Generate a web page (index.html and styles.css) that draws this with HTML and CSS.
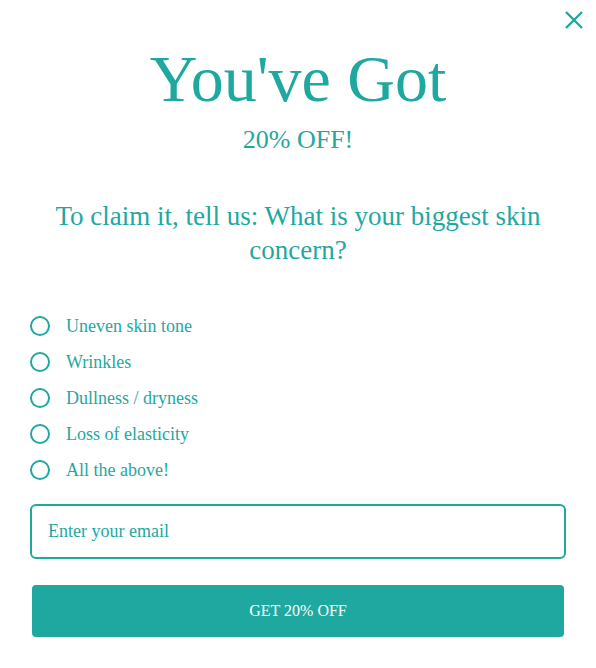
FILE: index.html
```html
<!DOCTYPE html>
<html lang="en">
<head>
    <meta charset="UTF-8">
    <meta name="viewport" content="width=device-width, initial-scale=1.0">
    <title>You've Got 20% OFF</title>
    <link rel="stylesheet" href="styles.css">
</head>
<body>
    <div id="popup">
        <button id="close-button" aria-label="Close">
            <svg width="18" height="18" viewBox="0 0 18 18">
                <path d="M1 1 L17 17 M17 1 L1 17" stroke="#1fa89f" stroke-width="2.4" fill="none"/>
            </svg>
        </button>
        <h1 class="title">You've Got</h1>
        <p class="subtitle">20% OFF!</p>
        <h2 class="question">To claim it, tell us: What is your biggest skin<br>concern?</h2>
        <form id="offer-form">
            <ul class="option-list">
                <li class="option-item"><span class="radio"></span>Uneven skin tone</li>
                <li class="option-item"><span class="radio"></span>Wrinkles</li>
                <li class="option-item"><span class="radio"></span>Dullness / dryness</li>
                <li class="option-item"><span class="radio"></span>Loss of elasticity</li>
                <li class="option-item"><span class="radio"></span>All the above!</li>
            </ul>
            <input type="text" id="email-input" placeholder="Enter your email" />
            <button type="button" id="submit-button">GET 20% OFF</button>
        </form>
    </div>
</body>
</html>
```

FILE: styles.css
```css
body {
    font-family: "Liberation Serif", "DejaVu Serif", serif;
    background: #ffffff;
    color: #1fa89f;
    margin: 0;
}
#popup {
    position: relative;
    padding: 39px 30px 0 30px;
}
#close-button {
    position: absolute;
    top: 11px;
    right: 13px;
    background: none;
    border: none;
    padding: 0;
    cursor: pointer;
}
.title {
    font-weight: normal;
    font-size: 66px;
    line-height: 80px;
    margin: 0;
    text-align: center;
}
.subtitle {
    font-size: 26px;
    line-height: 30px;
    margin: 6px 0 0 0;
    text-align: center;
}
.question {
    font-weight: normal;
    font-size: 27px;
    line-height: 34px;
    margin: 44px 0 0 0;
    text-align: center;
}
.option-list {
    list-style: none;
    padding: 0;
    margin: 41px 0 0 0;
}
.option-item {
    display: flex;
    align-items: center;
    height: 36px;
    font-size: 18px;
}
.radio {
    width: 16px;
    height: 16px;
    border: 2px solid #1fa89f;
    border-radius: 50%;
    margin-right: 16px;
}
#email-input {
    display: block;
    box-sizing: border-box;
    width: 100%;
    height: 55px;
    margin-top: 16px;
    padding: 0 16px;
    border: 2px solid #1fa89f;
    border-radius: 6px;
    font-family: inherit;
    font-size: 18px;
    color: #1fa89f;
    outline: none;
}
#email-input::placeholder {
    color: #1fa89f;
}
#submit-button {
    display: block;
    width: calc(100% - 4px);
    height: 52px;
    margin: 26px 2px 0 2px;
    background: #1fa89f;
    color: #ffffff;
    border: none;
    border-radius: 4px;
    font-family: inherit;
    font-size: 16px;
    cursor: pointer;
}
```
